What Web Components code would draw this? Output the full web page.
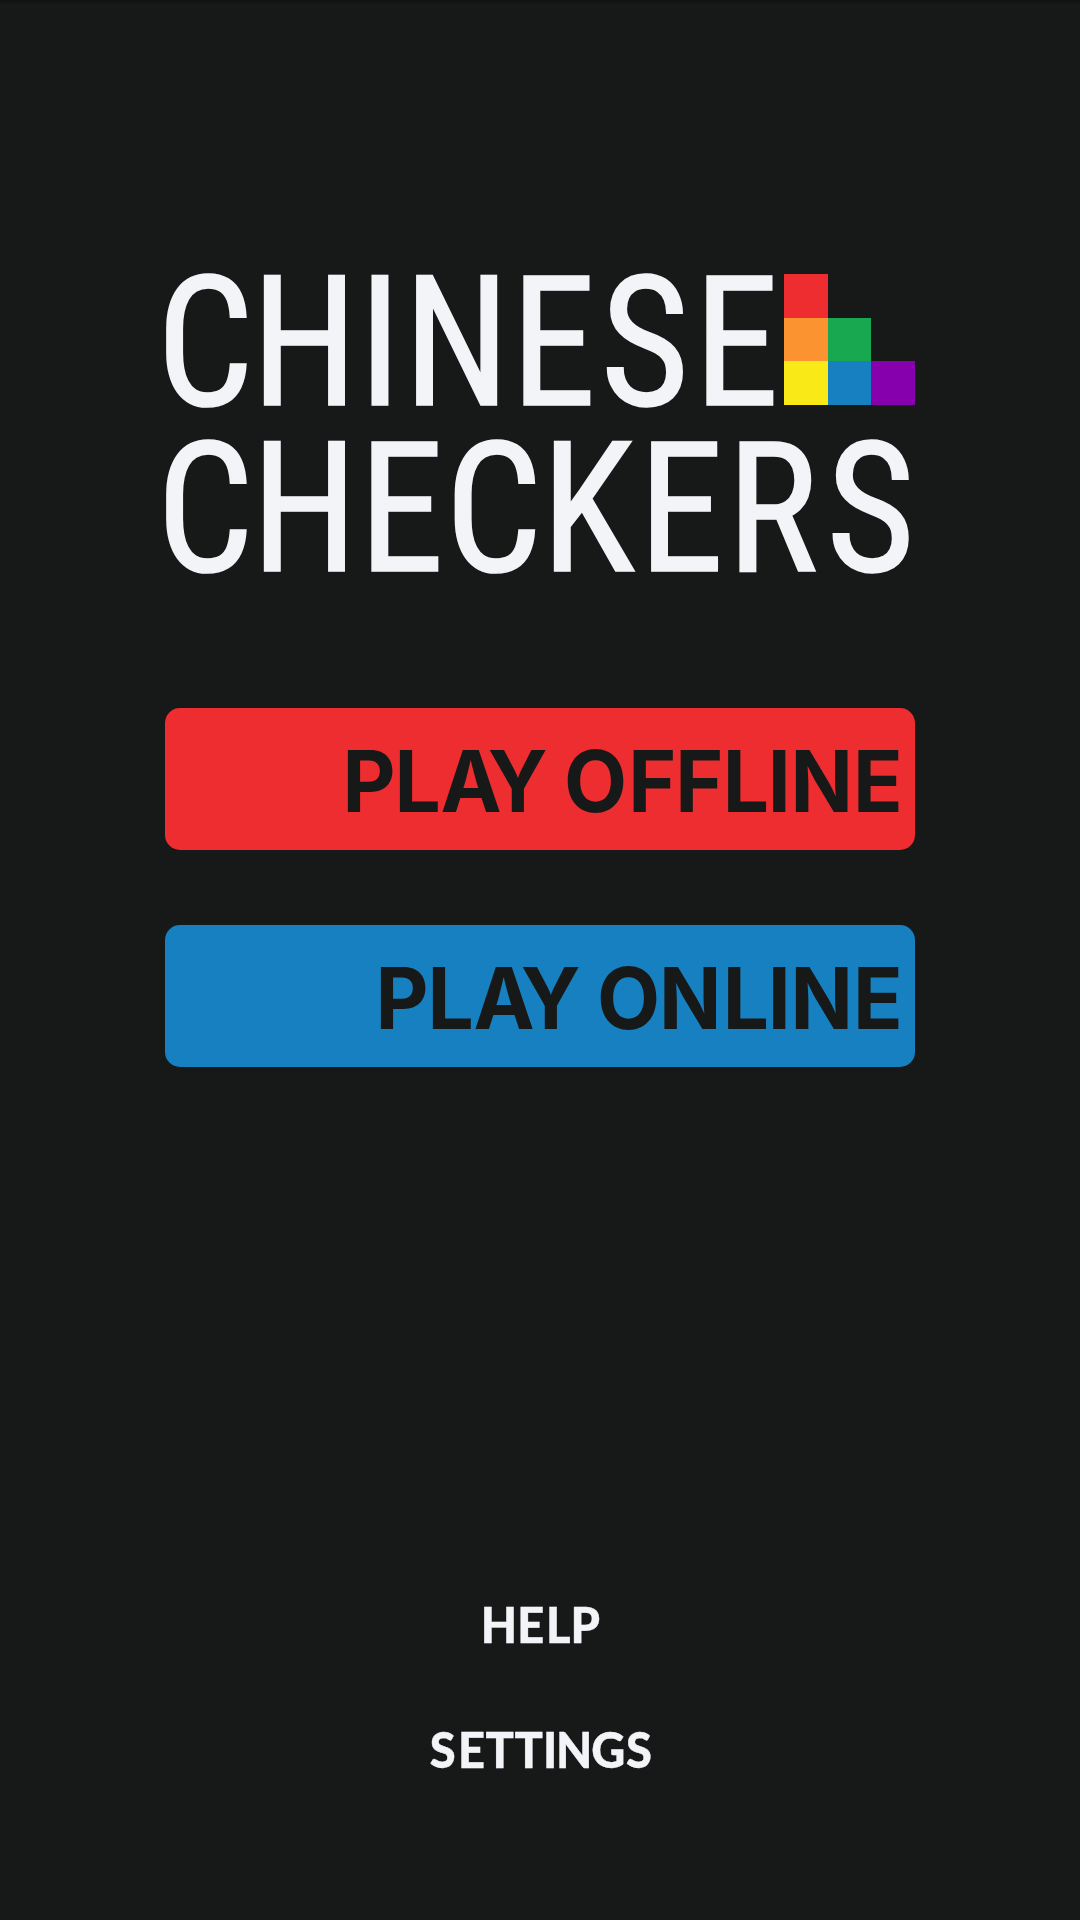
<!DOCTYPE html>
<html lang="en"><head><meta charset="utf-8"><title>Chinese Checkers</title>
<style>html,body{margin:0;height:1920px;background:#171918;overflow:hidden}</style></head><body><main-menu></main-menu>
<script>
// A run of text, optically spaced: one x per letter, horizontally scaled.
const run = (text, xs, y, scale) => `<text y="${y}" transform="scale(${scale} 1)" x="${xs.map(x => (x / scale).toFixed(2)).join(' ')}">${text}</text>`;
const xsOf = el => el.getAttribute('xs').split(' ').map(Number);

class GameTitle extends HTMLElement {
  connectedCallback() {
    this.attachShadow({mode:'open'}).innerHTML = `<style>:host{display:block;width:750px;height:303px}svg{display:block;overflow:visible}
text{font:400 182px "Roboto Condensed",Roboto,sans-serif;fill:#f3f4f8;stroke:#f3f4f8;stroke-width:1.600px}</style>
<svg width="750" height="303" viewBox="165 272 750 303">
${run('CHINESE', [156.4,251.6,358.5,403.8,511,600.6,693.9], 404.6, .94)}
${run('CHECKERS', [156.4,251.6,359,445.1,541.4,638.7,727,826.2], 571.2, .94)}
<g shape-rendering="crispEdges"><path fill="#ee2d31" d="M784 274h44v44h-44z"/><path fill="#fa9330" d="M784 318h44v43h-44z"/><path fill="#17a850" d="M828 318h43v43h-43z"/><path fill="#f9e916" d="M784 361h44v44h-44z"/><path fill="#1780c1" d="M828 361h43v44h-43z"/><path fill="#8600ad" d="M871 361h44v44h-44z"/></g></svg>`;
  }
}
class MenuButton extends HTMLElement {
  connectedCallback() {
    this.attachShadow({mode:'open'}).innerHTML = `<style>:host{display:block;width:750px;height:142px;border-radius:15px}svg{display:block}
text{font:700 85.300px Inter,sans-serif;fill:#171918}</style>
<svg width="750" height="142" viewBox="165 0 750 142">${run(this.getAttribute('label'), xsOf(this), 104, .96)}</svg>`;
  }
}
class MenuLink extends HTMLElement {
  connectedCallback() {
    this.attachShadow({mode:'open'}).innerHTML = `<style>:host{display:block;width:750px;height:60px}svg{display:block}
text{font:900 49.500px Lato,sans-serif;fill:#f3f4f8;stroke:#f3f4f8;stroke-width:.4px}</style>
<svg width="750" height="60" viewBox="165 0 750 60">${run(this.getAttribute('label'), xsOf(this), 48.4, .95)}</svg>`;
  }
}
class MainMenu extends HTMLElement {
  connectedCallback() {
    this.attachShadow({mode:'open'}).innerHTML = `<style>:host{display:flex;flex-direction:column;align-items:center;height:1920px;box-sizing:border-box;padding-top:272px;background:linear-gradient(#101211,#171918 5px)}
.offline{background:#ee2d31;margin-top:133px}.online{background:#1780c1;margin-top:75px}.help{margin-top:528px}.settings{margin-top:65px}</style>
<game-title></game-title>
<menu-button class="offline" label="PLAY OFFLINE" xs="342.6 394.6 440.6 487.7 545 563.9 628.3 675.3 722.7 767.8 790.5 853"></menu-button>
<menu-button class="online" label="PLAY ONLINE" xs="375.4 427.6 473.6 520.7 578 596.9 659.1 722.7 767.8 790.5 853"></menu-button>
<menu-link class="help" label="HELP" xs="480.8 517.2 546.1 570.4"></menu-link>
<menu-link class="settings" label="SETTINGS" xs="429.8 458 485.6 514.5 542.9 556 591.3 626"></menu-link>`;
  }
}
customElements.define('game-title', GameTitle);
customElements.define('menu-button', MenuButton);
customElements.define('menu-link', MenuLink);
customElements.define('main-menu', MainMenu);
</script></body></html>
